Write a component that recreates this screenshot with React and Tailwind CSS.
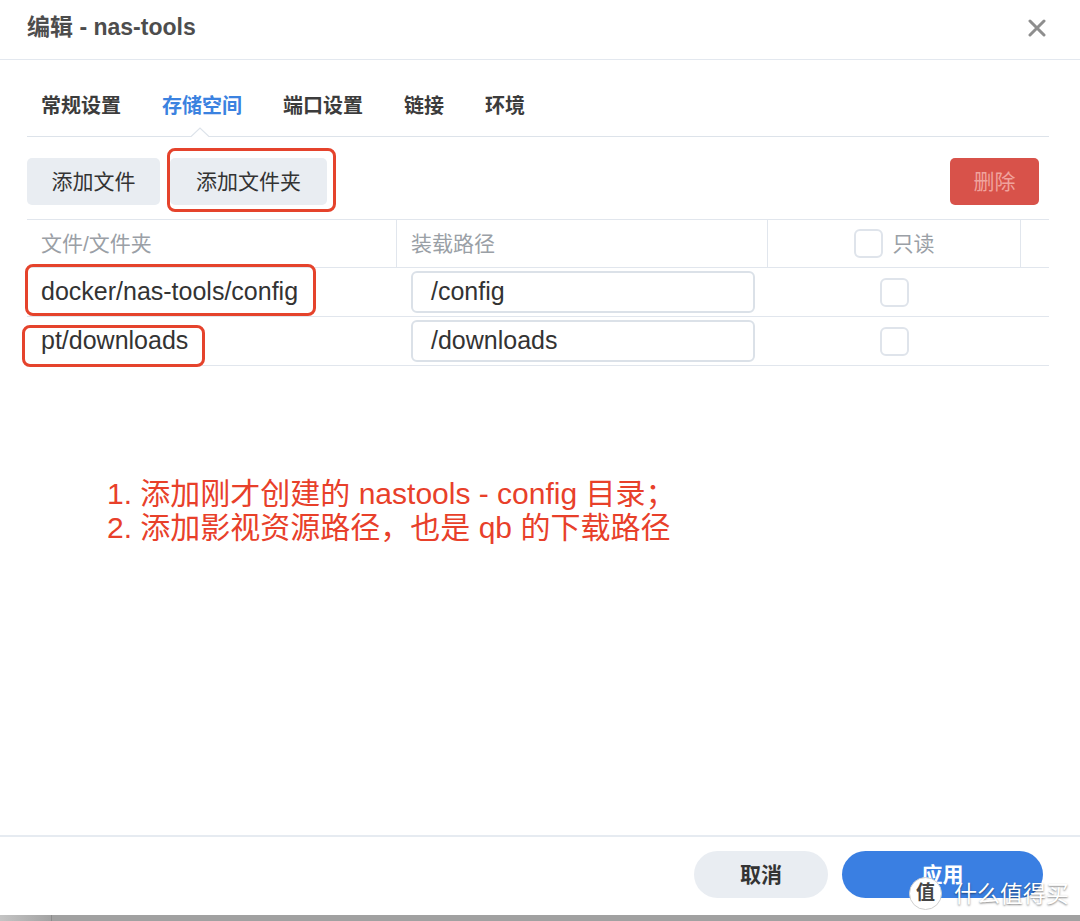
import React from "react";

const tabs = ["常规设置", "存储空间", "端口设置", "链接", "环境"];

const rows = [
  { src: "docker/nas-tools/config", mount: "/config", box: "left-[-2px] top-[-4px] w-[291px] h-[52px]" },
  { src: "pt/downloads", mount: "/downloads", box: "left-[-5px] top-[8px] w-[183px] h-[42px]" },
];

function Checkbox() {
  return <span className="inline-block w-[29px] h-[29px] rounded-[6px] border-2 border-[#dfe4eb] bg-white" />;
}

export default function App() {
  return (
    <div className="relative w-full h-[921px] flex flex-col bg-white font-['Liberation_Sans','Noto_Sans_CJK_SC',sans-serif] text-[#333]">
      {/* Dialog header */}
      <div className="h-[60px] shrink-0 border-b border-[#e3e8ef] pl-[27px] pr-[34px] flex items-center justify-between">
        <h1 className="text-[23px] font-bold text-[#4d4d4d] -mt-[4px]">编辑 - nas-tools</h1>
        <svg width="18" height="18" viewBox="0 0 18 18" className="-mt-[4px]">
          <path d="M2 2L16 16M16 2L2 16" stroke="#8e8e8e" strokeWidth="3" strokeLinecap="round" />
        </svg>
      </div>

      {/* Body */}
      <div className="flex-1 pl-[27px] pr-[31px] flex flex-col">
        {/* Tabs */}
        <div className="relative h-[77px] shrink-0 border-b border-[#dde3ea] pl-[14px] pt-[32px] flex gap-[41px]">
          {tabs.map((t, i) => (
            <span
              key={t}
              className={`text-[20px] leading-[28px] font-bold ${i === 1 ? "text-[#3b82e0]" : "text-[#3c3c3c]"}`}>
              {t}
            </span>
          ))}
          <svg width="18" height="10" viewBox="0 0 18 10" className="absolute left-[164px] bottom-[-1px]">
            <path d="M0 10L9 1L18 10Z" fill="white" />
            <path d="M0 9.5L9 1L18 9.5" fill="none" stroke="#dde3ea" strokeWidth="1.2" />
          </svg>
        </div>

        {/* Toolbar */}
        <div className="mt-[21px] h-[47px] shrink-0 flex items-stretch">
          <button className="w-[133px] rounded-[5px] bg-[#e9edf2] text-[21px] text-[#333]">添加文件</button>
          <div className="relative ml-[10px]">
            <button className="w-[157px] h-full rounded-[5px] bg-[#e9edf2] text-[21px] text-[#333]">添加文件夹</button>
            <span className="absolute left-[-3px] top-[-10px] w-[169px] h-[64px] rounded-[8px] border-[3px] border-[#e5432c]" />
          </div>
          <button className="ml-auto mr-[10px] w-[89px] rounded-[5px] bg-[#d8524a] text-[21px] text-[#f0a39d]">删除</button>
        </div>

        {/* Table */}
        <div className="mt-[14px] border-t border-[#e1e6ed]">
          <div className="grid grid-cols-[370px_371px_253px_1fr] h-[48px] border-b border-[#e1e6ed] text-[21px] text-[#9aa0a6]">
            <div className="border-r border-[#e1e6ed] pl-[14px] flex items-center">文件/文件夹</div>
            <div className="border-r border-[#e1e6ed] pl-[14px] flex items-center">装载路径</div>
            <div className="border-r border-[#e1e6ed] flex items-center justify-center gap-[10px]">
              <Checkbox />
              <span>只读</span>
            </div>
            <div />
          </div>
          {rows.map((r) => (
            <div key={r.src} className="grid grid-cols-[370px_371px_253px_1fr] h-[49px] border-b border-[#e1e6ed]">
              <div className="relative pl-[14px] flex items-center text-[25px]">
                {r.src}
                <span className={`absolute ${r.box} rounded-[8px] border-[3px] border-[#e5432c]`} />
              </div>
              <div className="pl-[14px] pr-[13px] flex items-center">
                <div className="w-full h-[42px] rounded-[6px] border-2 border-[#dbe1e8] pl-[18px] flex items-center text-[25px]">
                  {r.mount}
                </div>
              </div>
              <div className="flex items-center justify-center">
                <Checkbox />
              </div>
              <div />
            </div>
          ))}
        </div>

        {/* Annotation */}
        <div className="mt-[111px] ml-[80px] text-[30px] leading-[34px] text-[#e8402a]">
          <p>1. 添加刚才创建的 nastools - config 目录；</p>
          <p>2. 添加影视资源路径，也是 qb 的下载路径</p>
        </div>
      </div>

      {/* Footer */}
      <div className="h-[80px] shrink-0 border-t-2 border-[#e6ebf1] pt-[14px] pr-[37px] flex justify-end items-start gap-[14px]">
        <button className="w-[134px] h-[47px] rounded-full bg-[#e9edf2] text-[21px] font-bold text-[#333]">取消</button>
        <button className="w-[201px] h-[47px] rounded-full bg-[#3a7fe2] text-[21px] font-bold text-white">应用</button>
      </div>

      {/* Underlying window edge */}
      <div className="h-[6px] shrink-0 flex">
        <div className="w-[52px] bg-gradient-to-r from-[#c4c4c4] to-[#a3a3a3] border-r border-[#8c8c8c]" />
        <div className="flex-1 bg-[#a1a1a1]" />
      </div>

      {/* Watermark */}
      <div className="absolute left-[909px] top-[877px] flex items-center gap-[12px] whitespace-nowrap">
        <span className="shrink-0 w-[33px] h-[33px] rounded-full bg-white border border-[#cfcfcf] flex items-center justify-center text-[19px] font-bold text-[#444]">
          值
        </span>
        <span className="text-[23px] leading-[30px] text-white [text-shadow:0_1px_2px_rgba(0,0,0,0.5)]">什么值得买</span>
      </div>
    </div>
  );
}
